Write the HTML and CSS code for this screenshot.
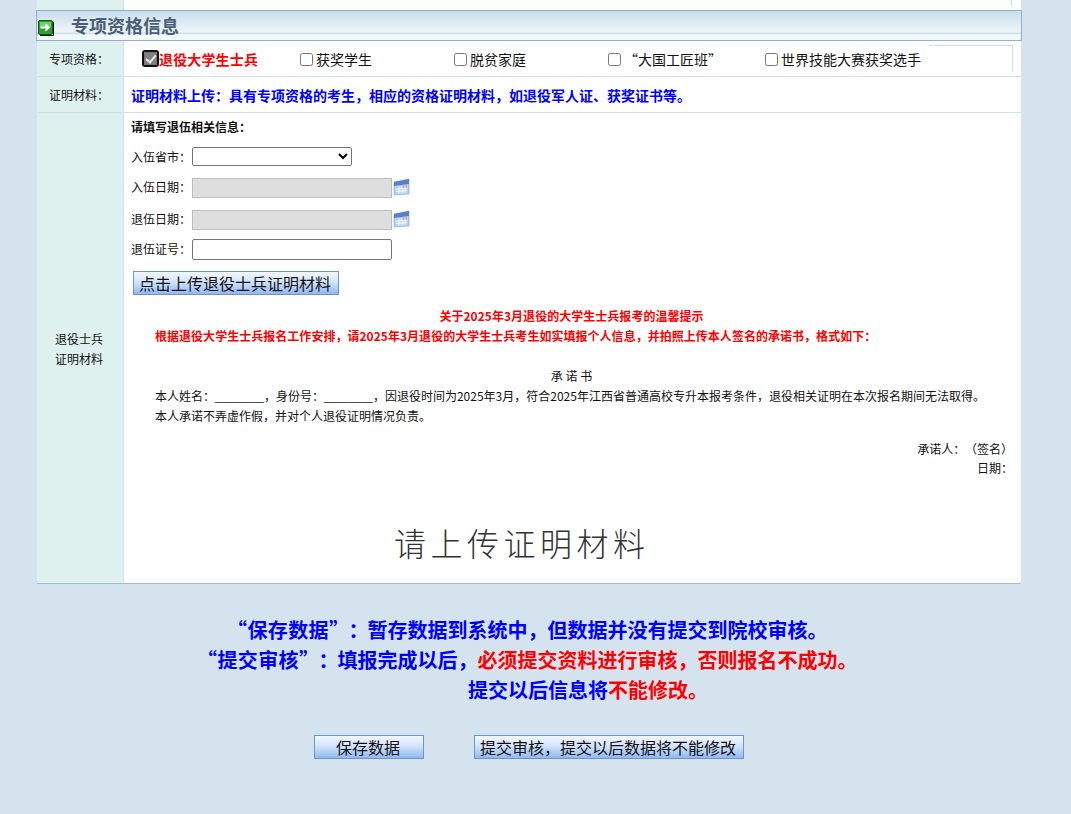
FILE: index.html
```html
<!DOCTYPE html>
<html lang="zh-CN">
<head>
<meta charset="utf-8">
<title>专项资格信息</title>
<link rel="stylesheet" href="styles.css">
</head>
<body>
<div class="page">
  <div class="strip"><div class="strip-side"></div><div class="strip-main"><div class="strip-inner"></div></div></div>
  <div class="section-head">
    <span class="arrow-icon"><svg width="16" height="16" viewBox="0 0 16 16"><rect x="0.5" y="0.5" width="14" height="14" rx="1.5" fill="#2f9e2f" stroke="#0e5a12"/><rect x="2" y="2" width="11" height="5" fill="#6fd06a"/><path d="M2.5 6.5H7.5V3.5L12.5 7.5L7.5 11.5V8.5H2.5Z" fill="#fff"/><path d="M15.5 2V15.5H2" fill="none" stroke="#111"/></svg></span>
    <h2 class="section-title">专项资格信息</h2>
  </div>
  <div class="row row-options">
    <div class="side">专项资格：</div>
    <div class="main options">
      <label class="opt opt-1"><input type="checkbox" class="box-focus" checked disabled><span class="opt-red">退役大学生士兵</span></label>
      <label class="opt opt-2"><input type="checkbox"><span>获奖学生</span></label>
      <label class="opt opt-3"><input type="checkbox"><span>脱贫家庭</span></label>
      <label class="opt opt-4"><input type="checkbox"><span>“大国工匠班”</span></label>
      <label class="opt opt-5"><input type="checkbox"><span>世界技能大赛获奖选手</span></label>
      <div class="corner"></div>
    </div>
  </div>
  <div class="row row-proof">
    <div class="side">证明材料：</div>
    <div class="main proof-note">证明材料上传：具有专项资格的考生，相应的资格证明材料，如退役军人证、获奖证书等。</div>
  </div>
  <div class="row row-detail">
    <div class="side side-multi">退役士兵<br>证明材料</div>
    <div class="main detail">
      <div class="form-title">请填写退伍相关信息：</div>
      <div class="field f-select"><span class="field-label">入伍省市：</span><select class="sel"><option></option></select></div>
      <div class="field f-date"><span class="field-label">入伍日期：</span><input class="inp inp-off" disabled>
        <svg class="cal" width="17" height="18" viewBox="0 0 17 18"><path d="M1 4L16 1V16L1 17Z" fill="#b9d2f0" stroke="#7f9fd0" stroke-width=".6"/><path d="M1 4L16 1V6L1 8Z" fill="#4f83cc"/><path d="M9 8l5-1v3l-5 .6z" fill="#ef8f8f"/><path d="M3 11l11-1M3 13.500l11-1M6 8.500v7M9 8v7.500M12 7.500v7.500" stroke="#fff" stroke-width=".8"/></svg></div>
      <div class="field f-date"><span class="field-label">退伍日期：</span><input class="inp inp-off" disabled>
        <svg class="cal" width="17" height="18" viewBox="0 0 17 18"><path d="M1 4L16 1V16L1 17Z" fill="#b9d2f0" stroke="#7f9fd0" stroke-width=".6"/><path d="M1 4L16 1V6L1 8Z" fill="#4f83cc"/><path d="M9 8l5-1v3l-5 .6z" fill="#ef8f8f"/><path d="M3 11l11-1M3 13.500l11-1M6 8.500v7M9 8v7.500M12 7.500v7.500" stroke="#fff" stroke-width=".8"/></svg></div>
      <div class="field f-cert"><span class="field-label">退伍证号：</span><input class="inp"></div>
      <button class="btn btn-upload" type="button">点击上传退役士兵证明材料</button>
      <div class="notice-title">关于2025年3月退役的大学生士兵报考的温馨提示</div>
      <div class="notice-body">根据退役大学生士兵报名工作安排，请2025年3月退役的大学生士兵考生如实填报个人信息，并拍照上传本人签名的承诺书，格式如下：</div>
      <div class="pledge-title">承 诺 书</div>
      <div class="pledge-text">本人姓名：<span class="blank">________</span>，身份号：<span class="blank">________</span>，因退役时间为2025年3月，符合2025年江西省普通高校专升本报考条件，退役相关证明在本次报名期间无法取得。</div>
      <div class="pledge-text pledge-second">本人承诺不弄虚作假，并对个人退役证明情况负责。</div>
      <div class="sign sign-1">承诺人： （签名）</div>
      <div class="sign sign-2">日期：</div>
      <div class="upload-hint">请上传证明材料</div>
    </div>
  </div>
  <div class="tips">
    <div class="tip tip-1"><span class="blue"><span class="tip-head">“保存数据”</span><span class="tip-colon">：</span>暂存数据到系统中，但数据并没有提交到院校审核。</span></div>
    <div class="tip tip-2"><span class="blue"><span class="tip-head">“提交审核”</span><span class="tip-colon">：</span>填报完成以后，</span><span class="red">必须提交资料进行审核，否则报名不成功。</span></div>
    <div class="tip tip-3"><span class="blue">提交以后信息将</span><span class="red">不能修改。</span></div>
  </div>
  <div class="actions">
    <button class="btn btn-save" type="button">保存数据</button>
    <button class="btn btn-submit" type="button">提交审核，提交以后数据将不能修改</button>
  </div>
</div>
</body>
</html>
```

FILE: styles.css
```css
* { box-sizing: border-box; }
html, body { margin: 0; padding: 0; }
body {
  background: #d5e3ee;
  font-family: "Noto Sans CJK SC", "Liberation Sans", sans-serif;
  font-size: 12px;
  color: #111;
  height: 814px;
  overflow: hidden;
}
.page { width: 986px; margin-left: 36px; }

.strip { display: flex; height: 10px; padding-left: 1px; }
.strip-side { width: 87px; background: #dff1ef; border-right: 1px solid #cfdfec; }
.strip-main { width: 897px; background: #fff; padding-right: 9px; }
.strip-inner { height: 6px; border-right: 1px solid #cfdfec; }

.section-head {
  display: flex;
  align-items: center;
  height: 31px;
  border: 1px solid #8fb2d3;
  background: linear-gradient(#c9deea 0%, #dbe9f1 35%, #eef5f8 70%, #cfe2e6 78%, #f2f7f9 82%, #f4f8fa 100%);
}
.arrow-icon { display: flex; margin: 5px 0 0 1px; }
.section-title {
  margin: -2px 0 0 17px;
  font-size: 18px;
  line-height: 28px;
  font-weight: 700;
  color: #4a6076;
}

.row { display: flex; width: 984px; margin-left: 1px; background: #fff; border-bottom: 1px solid #cfdfec; }
.side {
  width: 87px;
  flex: none;
  background: #dff1ef;
  border-right: 1px solid #cfdfec;
  display: flex;
  align-items: center;
  justify-content: center;
  text-align: center;
  font-size: 12px;
  color: #111;
  padding-right: 2px;
}
.side-multi { line-height: 20px; padding-top: 2px; }
.main { flex: 1; min-width: 0; }

.row-options { height: 36px; }
.options { display: flex; align-items: flex-start; padding: 4px 8px 3px 0; }
.opt { display: flex; align-items: center; font-size: 14px; height: 28px; white-space: nowrap; color: #111; }
.opt input { margin: 0; width: 13px; height: 13px; flex: none; }
.opt span { line-height: 20px; }
.opt-1 { margin-left: 20px; width: 156px; }
.box-focus {
  appearance: none;
  -webkit-appearance: none;
  background: #808080;
  border: 1px solid #777;
  border-radius: 1px;
  outline: 2px solid #111;
  outline-offset: 0;
}
.box-focus::after {
  content: "";
  display: block;
  width: 4px;
  height: 8px;
  margin: 0 0 0 3px;
  border: solid #e8e8e8;
  border-width: 0 2px 2px 0;
  transform: rotate(40deg);
}
.opt .box-focus { margin: -2px 2px 0 0; }
.opt-red { color: #f00; font-weight: 700; font-size: 14px; letter-spacing: .15px; }
.opt-2 { width: 154px; }
.opt-2 input, .opt-3 input { margin-right: 3px; }
.opt-3 { width: 154px; }
.opt-4 { width: 157px; }
.opt-4 input { margin-right: 3px; }
.opt-5 { width: 164px; }
.opt-5 input { margin-right: 3px; }
.corner { flex: 1; height: 27px; border-top: 1px solid #cfdfec; border-right: 1px solid #cfdfec; }

.row-proof { height: 36px; }
.proof-note {
  display: flex;
  align-items: center;
  padding-left: 7px;
  color: #00f;
  font-weight: 700;
  font-size: 14px;
}

.row-detail { height: 471px; border-bottom: 1px solid #9fbdd6; }
.detail { padding: 4px 14px 0 7px; }
.form-title { font-weight: 700; line-height: 19px; font-size: 12px; margin-bottom: 11px; }
.field { display: flex; align-items: center; }
.field-label { width: 61px; flex: none; font-size: 12px; color: #111; }
.f-select { height: 19px; margin-bottom: 12px; }
.f-date { height: 20px; margin-bottom: 12px; }
.f-date + .f-date { margin-bottom: 9px; }
.f-date .field-label { padding-bottom: 4px; }
.f-cert .field-label { padding-bottom: 2px; }
.f-cert { height: 21px; margin-bottom: 11px; }
.sel { width: 160px; height: 19px; font-size: 12px; background: #fff; border: 1px solid #767676; border-radius: 2px; padding: 0; }
.inp { width: 200px; height: 20px; border: 1px solid #767676; border-radius: 2px; background: #fff; padding: 0 2px; }
.f-cert .inp { height: 21px; }
.inp-off { background: #dedede; border-color: #bbb; border-radius: 0; }
.cal { flex: none; margin: 0 0 2px 1px; }

.btn {
  display: block;
  border: 1px solid #6f94cc;
  background: linear-gradient(#f2f7ff 0%, #d4e4fb 45%, #8fb8f2 100%);
  color: #111;
  font-family: inherit;
  font-size: 16px;
  line-height: 20px;
  padding: 0 2px 1px 0;
  text-align: center;
  white-space: nowrap;
}
.btn-upload { width: 206px; height: 24px; margin-left: 2px; }

.notice-title { margin-top: 12px; text-align: center; color: #f00; font-weight: 700; font-size: 12px; line-height: 18px; padding-left: 5px; letter-spacing: .03px; }
.notice-body { margin-top: 2px; padding-left: 24px; color: #f00; font-weight: 700; font-size: 12px; line-height: 18px; white-space: nowrap; letter-spacing: .03px; }
.pledge-title { margin-top: 22px; text-align: center; font-size: 12px; line-height: 18px; padding-left: 5px; }
.pledge-text { padding-left: 24px; font-size: 12px; line-height: 18px; white-space: nowrap; margin-top: 2px; color: #111; }
.pledge-second { margin-top: 1px; }
.blank { font-family: "Liberation Sans", sans-serif; font-size: 11px; }
.sign { text-align: right; font-size: 12px; line-height: 18px; color: #111; margin-right: -6px; }
.sign-1 { margin-top: 15px; word-spacing: -3px; }
.sign-2 { margin-top: 1px; }
.upload-hint {
  margin-top: 42px;
  padding-left: 263px;
  font-size: 32px;
  font-weight: 300;
  letter-spacing: 4.500px;
  line-height: 46px;
  color: #333;
  white-space: nowrap;
}

.tips { margin-top: 31px; }
.tip { font-size: 20px; font-weight: 700; line-height: 30px; white-space: nowrap; }
.tip-1 { padding-left: 191px; }
.tip-2 { padding-left: 161px; }
.tip-3 { padding-left: 432px; }
.tip-head { letter-spacing: .4px; }
.tip-colon { margin-left: 9px; margin-right: -1px; }
.blue { color: #00f; }
.red { color: #f00; }

.actions { display: flex; margin-top: 30px; padding-left: 278px; gap: 50px; }
.btn-save { width: 110px; height: 24px; }
.btn-submit { width: 270px; height: 24px; }
```
